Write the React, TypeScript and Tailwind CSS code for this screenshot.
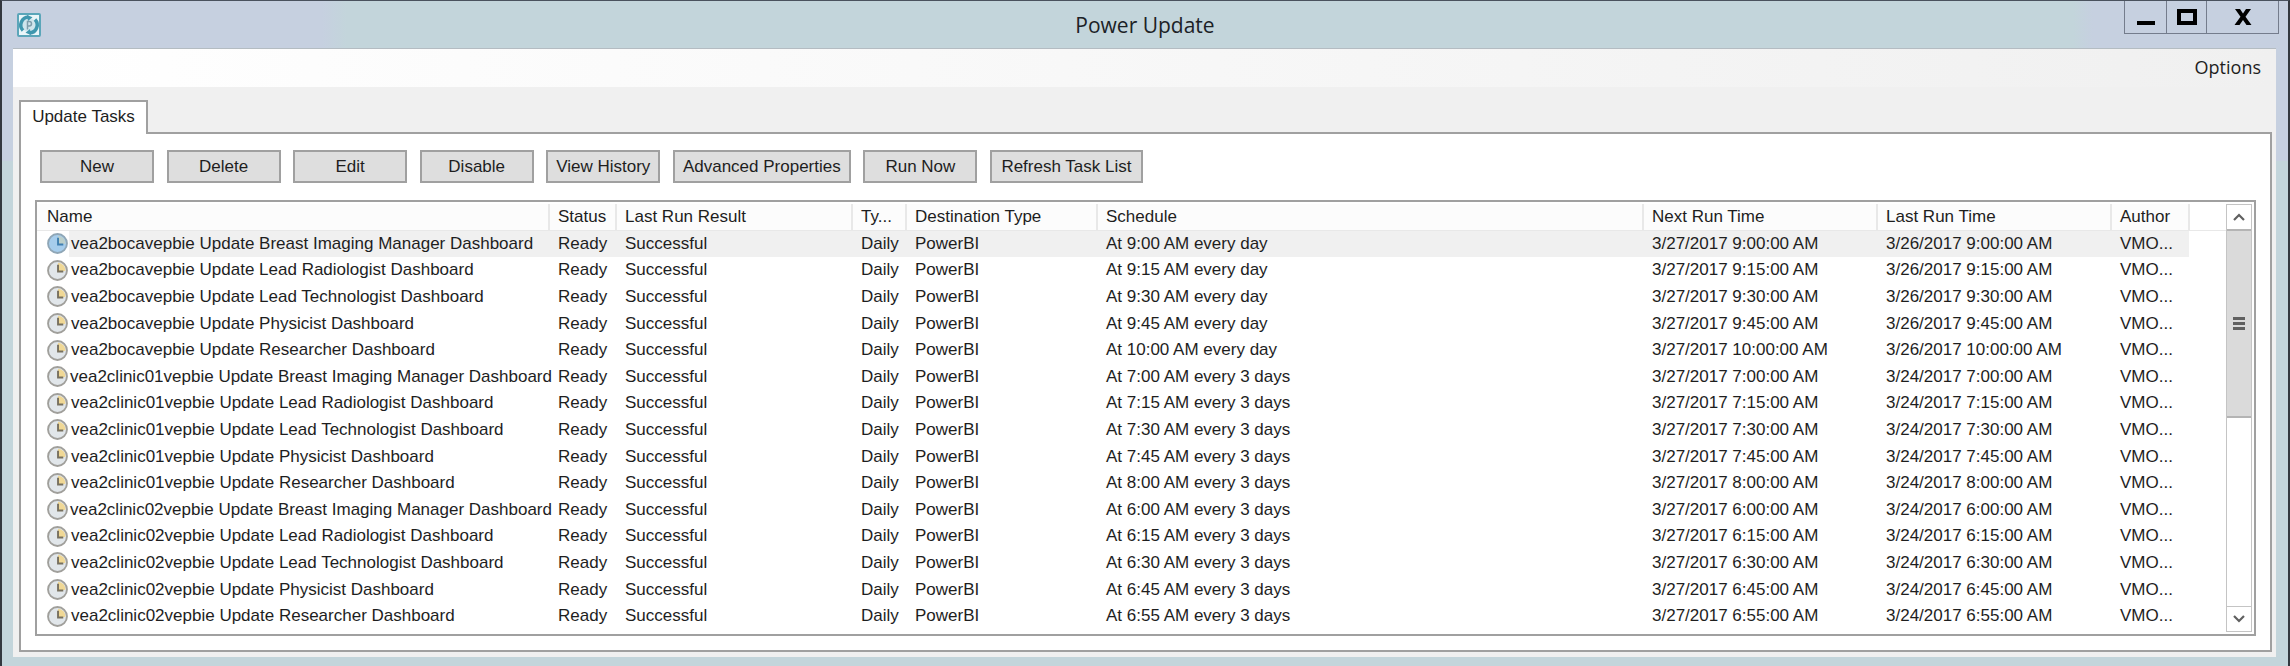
import React from "react";

type Task = { name: string; schedule: string; next: string; last: string };

const dashboards = [
  "Breast Imaging Manager",
  "Lead Radiologist",
  "Lead Technologist",
  "Physicist",
  "Researcher",
];

const groups = [
  { host: "vea2bocavepbie", every: "every day", last: "3/26/2017", times: ["9:00", "9:15", "9:30", "9:45", "10:00"] },
  { host: "vea2clinic01vepbie", every: "every 3 days", last: "3/24/2017", times: ["7:00", "7:15", "7:30", "7:45", "8:00"] },
  { host: "vea2clinic02vepbie", every: "every 3 days", last: "3/24/2017", times: ["6:00", "6:15", "6:30", "6:45", "6:55"] },
];

const tasks: Task[] = groups.flatMap((g) =>
  g.times.map((time, i) => ({
    name: `${g.host} Update ${dashboards[i]} Dashboard`,
    schedule: `At ${time} AM ${g.every}`,
    next: `3/27/2017 ${time}:00 AM`,
    last: `${g.last} ${time}:00 AM`,
  })),
);

const columns = [
  { label: "Name", width: "w-[512px]" },
  { label: "Status", width: "w-[67px]" },
  { label: "Last Run Result", width: "w-[236px]" },
  { label: "Ty...", width: "w-[54px]" },
  { label: "Destination Type", width: "w-[191px]" },
  { label: "Schedule", width: "" },
  { label: "Next Run Time", width: "w-[234px]" },
  { label: "Last Run Time", width: "w-[234px]" },
  { label: "Author", width: "w-[78px]" },
];

const actions = [
  { label: "New", width: "w-[114px]" },
  { label: "Delete", width: "w-[114px]" },
  { label: "Edit", width: "w-[114px]" },
  { label: "Disable", width: "w-[114px]" },
  { label: "View History", width: "w-[114px]" },
  { label: "Advanced Properties", width: "w-[178px]" },
  { label: "Run Now", width: "w-[114px]" },
  { label: "Refresh Task List", width: "w-[153px]" },
];

function AppIcon() {
  return (
    <svg viewBox="0 0 24 24" className="size-6" aria-hidden="true">
      <rect x="1" y="1" width="22" height="22" rx="1" fill="#eaf6f9" stroke="#5ba6b9" strokeWidth="2" />
      <circle cx="12" cy="12" r="7" fill="#cfe5ec" />
      <path d="M11.500 4A8 8 0 0 0 6 17.500" fill="none" stroke="#3f97ae" strokeWidth="3.500" />
      <path d="M12.500 20A8 8 0 0 0 18 6.500" fill="none" stroke="#3f97ae" strokeWidth="3.500" />
      <path d="M10 2l5.500 2.200L11 8z M14 22l-5.500-2.200L13 16z" fill="#3f97ae" />
      <path d="M10.500 16.500V8.500h1.800a2.200 2.200 0 0 1 0 4.400h-1.800" fill="none" stroke="#7f9daa" strokeWidth="1.500" />
    </svg>
  );
}

function ClockIcon({ selected }: { selected: boolean }) {
  return (
    <svg viewBox="0 0 20 20" className="size-[21px] shrink-0" aria-hidden="true">
      <circle cx="10" cy="10" r="9" fill={selected ? "#a6cdec" : "#e1e6ea"} stroke={selected ? "#8fa6b6" : "#a09f9b"} strokeWidth="1.800" />
      <path d="M10.500 2.500A7.500 7.500 0 0 1 17.500 10.500h-7z" fill={selected ? "#bccfcb" : "#f0d896"} />
      <path d="M10.500 4.500V11H15.500" fill="none" stroke={selected ? "#3f7fb0" : "#77705f"} strokeWidth="1.800" />
    </svg>
  );
}

function Chevron({ d }: { d: string }) {
  return (
    <svg viewBox="0 0 12 8" className="h-2 w-3" aria-hidden="true">
      <path d={d} fill="none" stroke="#606060" strokeWidth="2.200" />
    </svg>
  );
}

function TitleBar() {
  return (
    <header className="grid h-[47px] grid-cols-3 items-start">
      <div className="flex h-full items-center pl-[15px]">
        <AppIcon />
      </div>
      <h1 className="self-center text-center font-['Open_Sans',sans-serif] text-[21px] leading-7 text-[#1c2226]">Power Update</h1>
      <div className="flex justify-end pr-[9px]">
        <div className="flex h-[33px] divide-x divide-[#747c8c] border border-t-0 border-[#747c8c]">
          <button type="button" aria-label="Minimize" className="flex w-[42px] items-center justify-center">
            <svg viewBox="0 0 20 16" className="h-4 w-5" aria-hidden="true"><path d="M1 12h18v4H1z" /></svg>
          </button>
          <button type="button" aria-label="Maximize" className="flex w-10 items-center justify-center">
            <svg viewBox="0 0 20 16" className="h-4 w-5" aria-hidden="true"><path d="M2 2h16v12H2z" fill="none" stroke="#000" strokeWidth="4" /></svg>
          </button>
          <button type="button" aria-label="Close" className="flex w-[71px] items-center justify-center">
            <svg viewBox="0 0 18 16" className="h-4 w-[18px]" aria-hidden="true"><path d="M1 0h5l3 4.500L12 0h5l-5.500 7.800L17.500 16h-5L9 11l-3.500 5h-5l6-8.200z" /></svg>
          </button>
        </div>
      </div>
    </header>
  );
}

function TaskTable() {
  return (
    <div className="min-w-0 flex-1">
      <table className="w-full table-fixed border-collapse text-left">
        <thead>
          <tr className="h-[26px]">
            {columns.map((c, i) => (
              <th
                key={c.label}
                scope="col"
                className={`${c.width} ${i === 0 ? "pl-[10px]" : "pl-2"} border-r-2 border-b border-[#e8e8e8] bg-[#fcfcfc] py-0 pr-0 font-normal whitespace-nowrap`}
              >
                {c.label}
              </th>
            ))}
            <td className="w-[37px] border-b border-[#e8e8e8] p-0" />
          </tr>
        </thead>
        <tbody>
          {tasks.map((t, i) => {
            const shade = i === 0 ? "bg-[#f0f0f0]" : "";
            const cell = `p-0 pl-[9px] whitespace-nowrap ${shade}`;
            return (
              <tr key={t.name} className="h-[27px] nth-[5n]:h-[26px] nth-[5n+2]:h-[26px]">
                <td className={`p-0 whitespace-nowrap ${shade}`}>
                  <div className="flex items-center">
                    <span className="flex h-[26px] w-8 items-center bg-white pl-[10px]">
                      <ClockIcon selected={i === 0} />
                    </span>
                    <span className="pl-0.5">{t.name}</span>
                  </div>
                </td>
                <td className={cell}>Ready</td>
                <td className={cell}>Successful</td>
                <td className={cell}>Daily</td>
                <td className={cell}>PowerBI</td>
                <td className={cell}>{t.schedule}</td>
                <td className={cell}>{t.next}</td>
                <td className={cell}>{t.last}</td>
                <td className={cell}>VMO...</td>
                <td className="p-0" />
              </tr>
            );
          })}
        </tbody>
      </table>
    </div>
  );
}

function ScrollBar() {
  return (
    <div className="flex w-[26px] flex-col border border-[#c4c4c4] bg-white">
      <button type="button" aria-label="Scroll up" className="flex h-6 items-center justify-center">
        <Chevron d="M1 7l5-5 5 5" />
      </button>
      <div className="flex flex-1 flex-col">
        <div className="flex basis-1/2 flex-col items-center justify-center gap-0.5 border-y-2 border-[#b4b4b4] bg-[#dadada]">
          <i className="h-[3px] w-3 bg-[#606060]" />
          <i className="h-[3px] w-3 bg-[#606060]" />
          <i className="h-[3px] w-3 bg-[#606060]" />
        </div>
      </div>
      <button type="button" aria-label="Scroll down" className="flex h-[25px] items-center justify-center border-t border-[#c4c4c4]">
        <Chevron d="M1 1l5 5 5-5" />
      </button>
    </div>
  );
}

export default function App() {
  return (
    <div className="flex min-h-screen flex-col border-x-2 border-t border-x-[#33383f] border-t-[#4a525e] bg-[#c3d5db] bg-[linear-gradient(90deg,#c6d0e0_0,#c6d0e0_320px,#c3d5db_345px,#c3d5db_calc(100%_-_215px),#c6d0e0_calc(100%_-_195px))] bg-[length:100%_160px] bg-no-repeat font-['Liberation_Sans',sans-serif] text-[17px] leading-5 text-[#1e1e1e]">
      <TitleBar />
      <div className="mr-3 mb-[9px] ml-[11px] flex flex-1 flex-col border-t border-[#b4bcc2] bg-[#f0f0f0] pr-1 pb-[5px] pl-1.5">
        <nav className="-mr-1 -ml-1.5 flex h-[38px] items-center justify-end bg-linear-to-r from-white to-[#f0f0f0] pr-[15px] pb-0.5">
          <button type="button" className="font-['Open_Sans',sans-serif] text-[18px] leading-6">Options</button>
        </nav>
        <div role="tablist" className="mt-[13px] flex">
          <button type="button" role="tab" aria-selected="true" className="relative -mb-0.5 h-[34px] w-[129px] border-x-2 border-t-2 border-[#a0a0a0] bg-white pb-0.5 text-center text-[17px] whitespace-nowrap">
            Update Tasks
          </button>
        </div>
        <main className="flex flex-1 flex-col border-2 border-[#a0a0a0] bg-white pt-4 pr-3.5 pb-3.5 pl-[14px]">
          <div className="ml-[5px] flex w-[1103px] justify-between">
            {actions.map((a) => (
              <button key={a.label} type="button" className={`${a.width} h-[33px] border-2 border-[#a0a0a0] bg-[#dedede] text-center whitespace-nowrap`}>
                {a.label}
              </button>
            ))}
          </div>
          <div className="mt-[17px] flex flex-1 border-2 border-[#a0a0a0] bg-white py-0.5 pr-0.5">
            <TaskTable />
            <ScrollBar />
          </div>
        </main>
      </div>
    </div>
  );
}
